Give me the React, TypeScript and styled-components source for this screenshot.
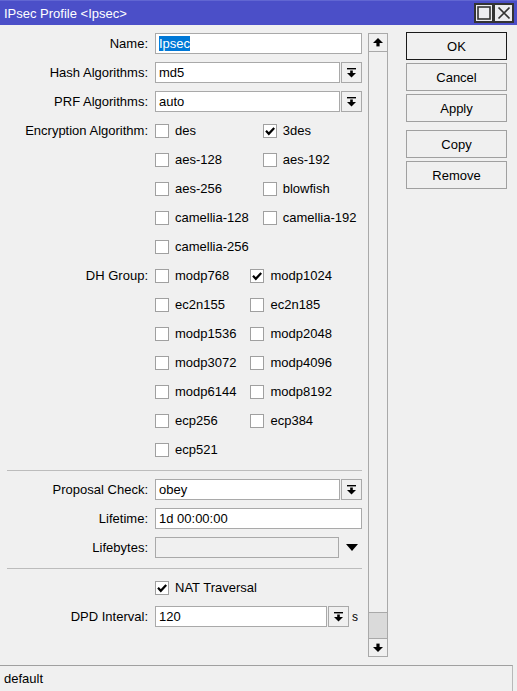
import React from 'react'
import styled, { createGlobalStyle } from 'styled-components'

const GlobalStyle = createGlobalStyle`
    html, body {
        margin: 0;
        padding: 0;
        background: #f0f0f0;
    }
    * {
        box-sizing: border-box;
    }
`

const encryption = [
    { name: 'des', checked: false },
    { name: '3des', checked: true },
    { name: 'aes-128', checked: false },
    { name: 'aes-192', checked: false },
    { name: 'aes-256', checked: false },
    { name: 'blowfish', checked: false },
    { name: 'camellia-128', checked: false },
    { name: 'camellia-192', checked: false },
    { name: 'camellia-256', checked: false },
]

const dhGroups = [
    { name: 'modp768', checked: false },
    { name: 'modp1024', checked: true },
    { name: 'ec2n155', checked: false },
    { name: 'ec2n185', checked: false },
    { name: 'modp1536', checked: false },
    { name: 'modp2048', checked: false },
    { name: 'modp3072', checked: false },
    { name: 'modp4096', checked: false },
    { name: 'modp6144', checked: false },
    { name: 'modp8192', checked: false },
    { name: 'ecp256', checked: false },
    { name: 'ecp384', checked: false },
    { name: 'ecp521', checked: false },
]

const DropIcon = () => (
    <svg width="9" height="10" viewBox="0 0 9 10">
        <rect x="0" y="0" width="9" height="1.4" fill="#000" />
        <rect x="3.2" y="2.5" width="2.6" height="3" fill="#000" />
        <polygon points="0,5 9,5 4.5,9.6" fill="#000" />
    </svg>
)

const ArrowIcon = ({ up }: { up?: boolean }) => (
    <svg width="10" height="9" viewBox="0 0 10 9">
        {up ? (
            <>
                <polygon points="5,0 10,5 0,5" fill="#000" />
                <rect x="3.4" y="5" width="3.2" height="3.4" fill="#000" />
            </>
        ) : (
            <>
                <rect x="3.4" y="0.6" width="3.2" height="3.4" fill="#000" />
                <polygon points="0,4 10,4 5,9" fill="#000" />
            </>
        )}
    </svg>
)

const CheckBox = ({ checked, label }: { checked?: boolean; label: string }) => (
    <CheckItem>
        <Box>
            {checked && (
                <svg width="12" height="12" viewBox="0 0 12 12">
                    <polyline
                        points="2,5.8 4.8,8.8 10.2,3"
                        fill="none"
                        stroke="#000"
                        strokeWidth="2.2"
                    />
                </svg>
            )}
        </Box>
        <span>{label}</span>
    </CheckItem>
)

const App = () => {
    return (
        <Window>
            <GlobalStyle />
            <TitleBar>
                <span>IPsec Profile &lt;Ipsec&gt;</span>
                <TitleButtons>
                    <TitleButton>
                        <svg width="14" height="14" viewBox="0 0 14 14">
                            <rect
                                x="1"
                                y="1"
                                width="12"
                                height="12"
                                fill="none"
                                stroke="#333"
                                strokeWidth="1.6"
                            />
                        </svg>
                    </TitleButton>
                    <TitleButton>
                        <svg width="14" height="14" viewBox="0 0 14 14">
                            <path
                                d="M1.5 1.5 L12.5 12.5 M12.5 1.5 L1.5 12.5"
                                stroke="#333"
                                strokeWidth="1.7"
                            />
                        </svg>
                    </TitleButton>
                </TitleButtons>
            </TitleBar>
            <Body>
                <Form>
                    <FieldRow>
                        <Label>Name:</Label>
                        <Input>
                            <Selected>Ipsec</Selected>
                        </Input>
                    </FieldRow>
                    <FieldRow>
                        <Label>Hash Algorithms:</Label>
                        <Combo>
                            <Input>md5</Input>
                            <DropButton>
                                <DropIcon />
                            </DropButton>
                        </Combo>
                    </FieldRow>
                    <FieldRow>
                        <Label>PRF Algorithms:</Label>
                        <Combo>
                            <Input>auto</Input>
                            <DropButton>
                                <DropIcon />
                            </DropButton>
                        </Combo>
                    </FieldRow>
                    <FieldRow>
                        <Label>Encryption Algorithm:</Label>
                        <CheckGrid>
                            {encryption.map((e) => (
                                <CheckBox
                                    key={e.name}
                                    label={e.name}
                                    checked={e.checked}
                                />
                            ))}
                        </CheckGrid>
                    </FieldRow>
                    <FieldRow>
                        <Label>DH Group:</Label>
                        <CheckGrid>
                            {dhGroups.map((g) => (
                                <CheckBox
                                    key={g.name}
                                    label={g.name}
                                    checked={g.checked}
                                />
                            ))}
                        </CheckGrid>
                    </FieldRow>
                    <Separator />
                    <FieldRow>
                        <Label>Proposal Check:</Label>
                        <Combo>
                            <Input>obey</Input>
                            <DropButton>
                                <DropIcon />
                            </DropButton>
                        </Combo>
                    </FieldRow>
                    <FieldRow>
                        <Label>Lifetime:</Label>
                        <Input>1d 00:00:00</Input>
                    </FieldRow>
                    <FieldRow>
                        <Label>Lifebytes:</Label>
                        <Combo>
                            <Input disabled width="184px" />
                            <OpenArrow>
                                <svg width="12" height="7" viewBox="0 0 12 7">
                                    <polygon points="0,0 12,0 6,7" fill="#000" />
                                </svg>
                            </OpenArrow>
                        </Combo>
                    </FieldRow>
                    <Separator />
                    <FieldRow>
                        <Label />
                        <CheckBox label="NAT Traversal" checked />
                    </FieldRow>
                    <FieldRow>
                        <Label>DPD Interval:</Label>
                        <Combo>
                            <Input width="172px">120</Input>
                            <DropButton>
                                <DropIcon />
                            </DropButton>
                            <Unit>s</Unit>
                        </Combo>
                    </FieldRow>
                </Form>
                <ScrollBar>
                    <ScrollButton>
                        <ArrowIcon up />
                    </ScrollButton>
                    <ScrollTrack />
                    <ScrollThumb />
                    <ScrollButton>
                        <ArrowIcon />
                    </ScrollButton>
                </ScrollBar>
                <Buttons>
                    <Button primary>OK</Button>
                    <Button>Cancel</Button>
                    <Button>Apply</Button>
                    <ButtonSpacer />
                    <Button>Copy</Button>
                    <Button>Remove</Button>
                </Buttons>
            </Body>
            <StatusBar>default</StatusBar>
        </Window>
    )
}

export default App

const Window = styled.div`
    width: 517px;
    height: 691px;
    display: flex;
    flex-direction: column;
    background: #f0f0f0;
    font-family: 'Liberation Sans', Arial, sans-serif;
    font-size: 13px;
    color: #000;
    overflow: hidden;
`

const TitleBar = styled.div`
    height: 25px;
    flex-shrink: 0;
    display: flex;
    align-items: center;
    justify-content: space-between;
    padding: 0 3px 0 4px;
    background: #4b4fc8;
    border-top: 1px solid #6166d2;
    color: #fff;
    font-size: 13px;
`

const TitleButtons = styled.div`
    display: flex;
`

const TitleButton = styled.div`
    width: 20px;
    height: 20px;
    display: flex;
    align-items: center;
    justify-content: center;
    background: #ececf0;
    border: 2px solid #333;
    & + & {
        border-left-width: 1px;
    }
`

const Body = styled.div`
    flex: 1;
    display: flex;
    min-height: 0;
`

const Form = styled.div`
    width: 362px;
    padding: 8px 0 0 7px;
    display: flex;
    flex-direction: column;
    gap: 8px;
`

const FieldRow = styled.div`
    display: grid;
    grid-template-columns: 141px 207px;
    column-gap: 7px;
    align-items: start;
`

const Label = styled.div`
    height: 21px;
    line-height: 21px;
    text-align: right;
    white-space: nowrap;
`

const Combo = styled.div`
    display: flex;
    align-items: center;
    gap: 1px;
`

const Input = styled.div<{ disabled?: boolean; width?: string }>`
    height: 21px;
    width: ${({ width }) => width || '100%'};
    flex: ${({ width }) => (width ? 'none' : '1')};
    line-height: 19px;
    padding: 0 3px;
    border: 1px solid #a9a9a9;
    background: ${({ disabled }) => (disabled ? '#f0f0f0' : '#fff')};
    white-space: nowrap;
    overflow: hidden;
`

const Selected = styled.span`
    background: #0078d7;
    color: #fff;
`

const DropButton = styled.div`
    width: 21px;
    height: 21px;
    flex-shrink: 0;
    display: flex;
    align-items: center;
    justify-content: center;
    background: #f0f0f0;
    border: 1px solid #a9a9a9;
`

const OpenArrow = styled.div`
    width: 22px;
    height: 21px;
    display: flex;
    align-items: center;
    justify-content: center;
    padding-left: 2px;
`

const Unit = styled.span`
    margin-left: 2px;
    font-size: 12px;
`

const CheckGrid = styled.div`
    display: grid;
    grid-template-columns: auto auto;
    justify-content: start;
    column-gap: 14px;
    row-gap: 8px;
`

const CheckItem = styled.div`
    height: 21px;
    display: flex;
    align-items: center;
    gap: 6px;
    white-space: nowrap;
`

const Box = styled.div`
    width: 14px;
    height: 14px;
    flex-shrink: 0;
    display: flex;
    align-items: center;
    justify-content: center;
    background: #fff;
    border: 1px solid #a0a0a0;
`

const Separator = styled.div`
    height: 1px;
    margin-top: 2px;
    background: #bcbcbc;
`

const ScrollBar = styled.div`
    width: 20px;
    margin: 8px 0 8px 6px;
    display: flex;
    flex-direction: column;
    border-left: 1px solid #a9a9a9;
    border-right: 1px solid #a9a9a9;
`

const ScrollButton = styled.div`
    height: 19px;
    flex-shrink: 0;
    display: flex;
    align-items: center;
    justify-content: center;
    background: #f0f0f0;
    border-top: 1px solid #a9a9a9;
    border-bottom: 1px solid #a9a9a9;
`

const ScrollTrack = styled.div`
    flex: 1;
    background: #f0f0f0;
`

const ScrollThumb = styled.div`
    height: 26px;
    background: #dadada;
    border-top: 1px solid #a9a9a9;
`

const Buttons = styled.div`
    width: 101px;
    margin: 7px 0 0 18px;
    display: flex;
    flex-direction: column;
    gap: 3px;
`

const ButtonSpacer = styled.div`
    height: 2px;
`

const Button = styled.div<{ primary?: boolean }>`
    height: 28px;
    display: flex;
    align-items: center;
    justify-content: center;
    background: #f0f0f0;
    border: 1px solid ${({ primary }) => (primary ? '#1a1a1a' : '#a0a0a0')};
`

const StatusBar = styled.div`
    height: 26px;
    flex-shrink: 0;
    width: 513px;
    display: flex;
    align-items: center;
    padding-left: 4px;
    border-top: 1px solid #a0a0a0;
    border-right: 1px solid #b8b8b8;
`
